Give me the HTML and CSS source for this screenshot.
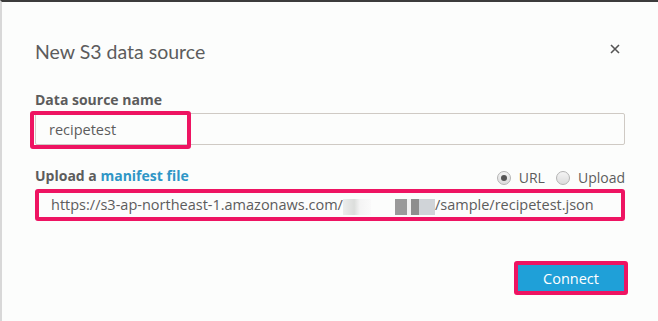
FILE: index.html
```html
<!DOCTYPE html>
<html lang="en">
<head>
  <meta charset="UTF-8" />
  <title>New S3 data source</title>
  <link rel="stylesheet" href="styles.css">
</head>
<body>
  <div class="modal">
    <div class="modal-header">
      <h1>New S3 data source</h1>
      <button class="close-btn" aria-label="Close">
        <svg viewBox="0 0 10 10" width="10" height="10">
          <path d="M1 1L9 9M9 1L1 9" stroke="#555" stroke-width="1.6" fill="none"/>
        </svg>
      </button>
    </div>

    <div class="field">
      <label class="field-label">Data source name</label>
      <div class="input-box">
        <span class="input-text">recipetest</span>
        <span class="mark mark-name"></span>
      </div>
    </div>

    <div class="field">
      <div class="label-row">
        <label class="field-label">Upload a <a href="#" class="link">manifest file</a></label>
        <div class="radios">
          <span class="radio checked"></span><span class="radio-text">URL</span>
          <span class="radio"></span><span class="radio-text">Upload</span>
        </div>
      </div>
      <div class="input-box marked">
        <span class="input-text">https://s3-ap-northeast-1.amazonaws.com/<span class="blur blur-a"></span><span class="blur blur-b"></span>/sample/recipetest.json</span>
      </div>
    </div>

    <div class="modal-footer">
      <button class="connect-btn">Connect</button>
    </div>
  </div>
</body>
</html>
```

FILE: styles.css
```css
* {
  box-sizing: border-box;
}
body {
  margin: 0;
  background-color: #fcfdfc;
  font-family: 'Open Sans', sans-serif;
  color: #5c5c5c;
}
.modal {
  height: 321px;
  border-top: 2px solid #3c3c3c;
  border-left: 2px solid #d8d8d8;
  padding: 0 33px 0 33px;
}
.modal-header {
  display: flex;
  justify-content: space-between;
  align-items: center;
  padding-top: 35px;
  margin-bottom: 23px;
}
h1 {
  margin: 0;
  font-family: Lato, sans-serif;
  font-size: 19.5px;
  font-weight: 400;
  line-height: 30px;
  color: #5c5c5c;
}
.close-btn {
  border: none;
  background: none;
  padding: 0;
  margin: 0 5px 6px 0;
  display: flex;
}
.field {
  margin-bottom: 21px;
}
.field-label {
  display: block;
  font-size: 14px;
  font-weight: 700;
  line-height: 20px;
  margin-bottom: 3px;
}
.link {
  color: #2f96c6;
  text-decoration: none;
}
.label-row {
  display: flex;
  justify-content: space-between;
  align-items: center;
}
.radios {
  display: flex;
  align-items: center;
  font-size: 14px;
}
.radio {
  width: 14px;
  height: 14px;
  border-radius: 50%;
  border: 1px solid #b4b4b4;
  background: linear-gradient(#f4f4f4, #dcdcdc);
  margin-right: 8px;
  position: relative;
}
.radio.checked::after {
  content: "";
  position: absolute;
  left: 3px;
  top: 3px;
  width: 6px;
  height: 6px;
  border-radius: 50%;
  background-color: #555;
}
.radio-text {
  margin-right: 11px;
}
.radio-text:last-child {
  margin-right: 0;
}
.input-box {
  position: relative;
  height: 32px;
  border: 1px solid #cfcac4;
  border-radius: 2px;
  padding-left: 13px;
  display: flex;
  align-items: center;
  font-size: 14.5px;
}
.input-box.marked {
  border: 4px solid #ee1462;
  border-radius: 3px;
  padding-left: 12px;
}
.mark {
  position: absolute;
  border: 4px solid #ee1462;
  border-radius: 3px;
}
.mark-name {
  left: -6px;
  top: -3px;
  width: 161px;
  height: 38px;
}
.blur {
  display: inline-block;
  height: 16px;
  vertical-align: middle;
}
.blur-a {
  width: 28px;
  margin-right: 24px;
  background: linear-gradient(90deg, #ecedec, #dcdedc 40%, #f4f4f4 60%, #fafafa);
}
.blur-b {
  width: 40px;
  background: linear-gradient(90deg, #9a9a9a 30%, #f2f2f2 30%, #f2f2f2 40%, #8e8e8e 40%, #8e8e8e 60%, #d0d4d8 60%);
}
.modal-footer {
  display: flex;
  justify-content: flex-end;
  margin-top: 40px;
  margin-right: -3px;
}
.connect-btn {
  width: 114px;
  height: 34px;
  border: 4px solid #ee1462;
  border-radius: 3px;
  background-color: #1fa0d8;
  color: #fff;
  font-family: 'Open Sans', sans-serif;
  font-size: 14.5px;
  padding: 0;
}
```
